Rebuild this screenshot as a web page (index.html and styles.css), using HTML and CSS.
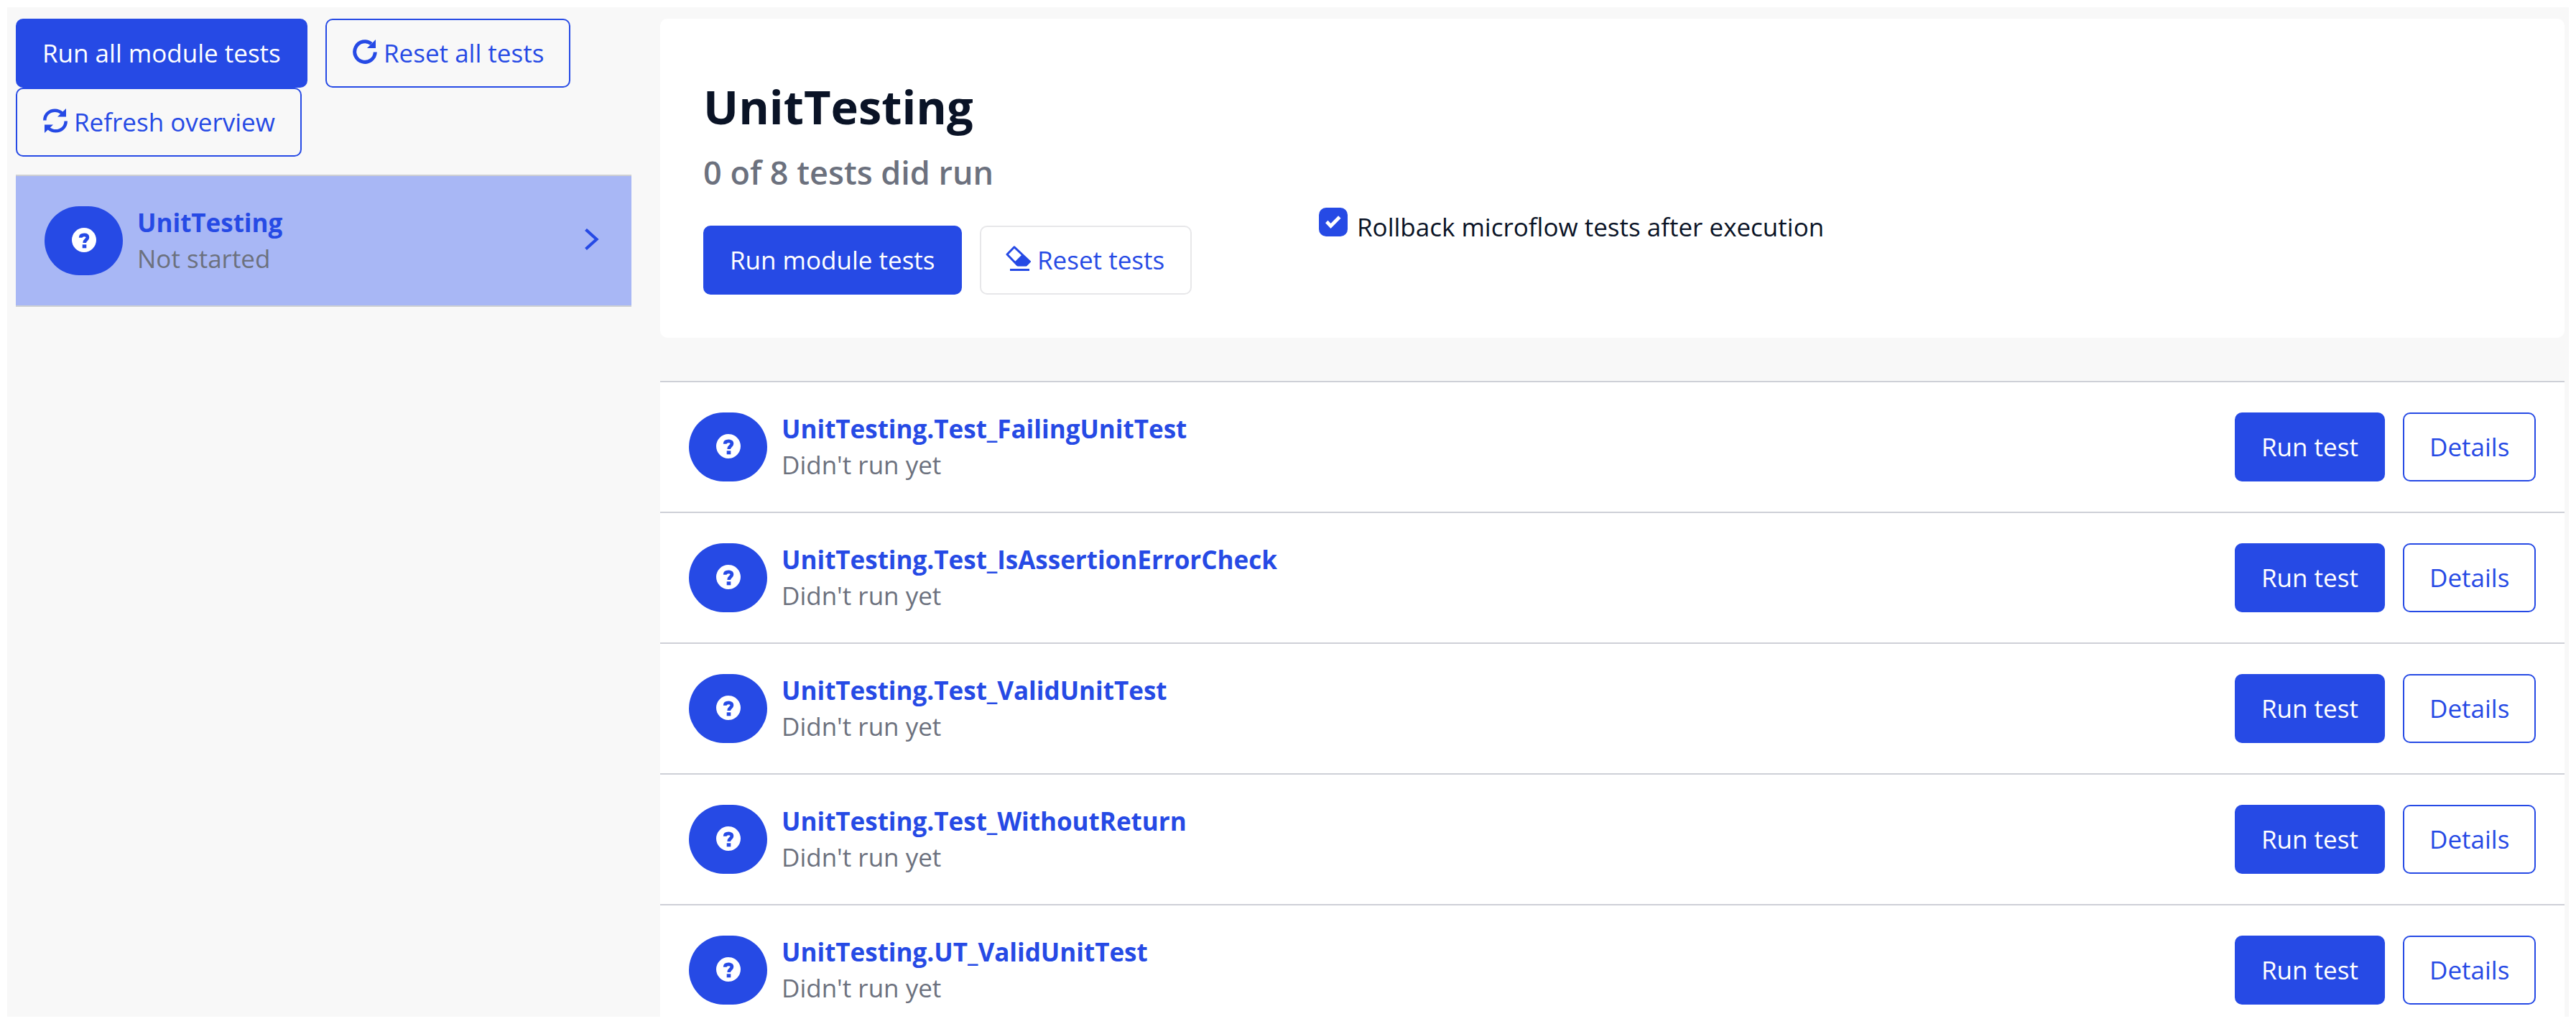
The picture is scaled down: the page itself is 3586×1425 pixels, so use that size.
FILE: index.html
```
<!DOCTYPE html>
<html lang="en">
<head>
<meta charset="utf-8">
<title>UnitTesting</title>
<link rel="stylesheet" href="styles.css">
</head>
<body>
<svg class="defs" width="0" height="0" aria-hidden="true">
  <symbol id="question" viewBox="0 0 34 34">
    <circle cx="17" cy="17" r="17" fill="#fff"/>
    <path d="M12.200 13.800C12.200 10.800 14.200 9.900 17.200 9.900c3.200 0 4.700 1.400 4.700 3.600 0 3.400-4.200 3-4.200 7.600" fill="none" stroke="#264ae5" stroke-width="4.700"/>
    <path d="M14.700 23.300h5.600v5h-5.600z" fill="#264ae5"/>
  </symbol>
</svg>
<div class="page">
  <aside class="sidebar">
    <div class="toolbar">
      <button class="btn primary run-all">Run all module tests</button>
      <button class="btn outline with-icon reset-all"><svg class="icon" viewBox="0 0 34 34"><path d="M31.300 17.500A14.300 14.300 0 1 1 26 5.900" fill="none" stroke="currentColor" stroke-width="5"/><path d="M32 0v12H20z" fill="currentColor"/></svg>Reset all tests</button>
      <button class="btn outline with-icon refresh"><svg class="icon" viewBox="0 0 34 34"><path d="M2.300 16.500C2.300 8 9 2.700 16.500 2.700c4 0 7 1.300 10 4M31.700 17.500c0 8.500-6.700 13.800-14.200 13.800-4 0-7-1.300-10-4" fill="none" stroke="currentColor" stroke-width="4.500"/><path d="M32 0v11.500H20zM2 34V22.500h12z" fill="currentColor"/></svg>Refresh overview</button>
    </div>
    <div class="module">
      <span class="badge"><svg><use href="#question"/></svg></span>
      <div class="label"><strong>UnitTesting</strong><span>Not started</span></div>
      <svg class="chevron" viewBox="0 0 21 30"><path d="M2.500 1.500L17.500 15L2.500 28.500" fill="none" stroke="currentColor" stroke-width="4.200"/></svg>
    </div>
  </aside>
  <main class="content">
    <section class="card">
      <div class="summary">
        <h1>UnitTesting</h1>
        <h2>0 of 8 tests did run</h2>
        <div class="actions">
          <button class="btn primary run-module">Run module tests</button>
          <button class="btn plain reset-module"><svg class="icon eraser" viewBox="0 0 36 36"><path d="M12 1.800L2 12L16.500 27H28.500L33.500 22Z" fill="none" stroke="currentColor" stroke-width="3" stroke-linejoin="round"/><path d="M22.500 12.500L34 22L29 28.300H17L13 22Z" fill="currentColor"/><path d="M6 32h27v3H6z" fill="currentColor"/></svg>Reset tests</button>
        </div>
      </div>
      <label class="rollback"><span class="checkbox"><svg viewBox="0 0 22 18"><path d="M1.800 8.500L7.500 14.500L19.800 2" fill="none" stroke="#fff" stroke-width="4.800"/></svg></span><span>Rollback microflow tests after execution</span></label>
    </section>
    <ul class="tests">
      <li class="test"><span class="badge"><svg><use href="#question"/></svg></span><div class="label"><strong>UnitTesting.Test_FailingUnitTest</strong><span>Didn't run yet</span></div><button class="btn primary run">Run test</button><button class="btn outline details">Details</button></li>
      <li class="test"><span class="badge"><svg><use href="#question"/></svg></span><div class="label"><strong>UnitTesting.Test_IsAssertionErrorCheck</strong><span>Didn't run yet</span></div><button class="btn primary run">Run test</button><button class="btn outline details">Details</button></li>
      <li class="test"><span class="badge"><svg><use href="#question"/></svg></span><div class="label"><strong>UnitTesting.Test_ValidUnitTest</strong><span>Didn't run yet</span></div><button class="btn primary run">Run test</button><button class="btn outline details">Details</button></li>
      <li class="test"><span class="badge"><svg><use href="#question"/></svg></span><div class="label"><strong>UnitTesting.Test_WithoutReturn</strong><span>Didn't run yet</span></div><button class="btn primary run">Run test</button><button class="btn outline details">Details</button></li>
      <li class="test"><span class="badge"><svg><use href="#question"/></svg></span><div class="label"><strong>UnitTesting.UT_ValidUnitTest</strong><span>Didn't run yet</span></div><button class="btn primary run">Run test</button><button class="btn outline details">Details</button></li>
    </ul>
  </main>
</div>
</body>
</html>
```
FILE: styles.css
```
* { box-sizing: border-box; }
html { height: 100%; background: #fff; }
body {
  margin: 0;
  height: 1425px;
  padding: 10px;
  overflow: hidden;
  font: 35px/50px "Open Sans", sans-serif;
  color: #0a1326;
}
.defs { display: block; height: 0; }
.page {
  display: flex;
  gap: 40px;
  height: 1405px;
  padding: 16px 6px 0 12px;
  overflow: hidden;
  background: #f8f8f8;
}
.sidebar { width: 857px; flex: none; }
.toolbar { display: flex; flex-wrap: wrap; column-gap: 25px; margin-bottom: 25px; }
.btn {
  display: flex;
  align-items: center;
  flex: none;
  height: 96px;
  margin: 0;
  padding: 0 0 0 35px;
  border: 2px solid #264ae5;
  border-radius: 10px;
  background: transparent;
  color: #264ae5;
  font: inherit;
  white-space: nowrap;
}
.primary { background: #264ae5; color: #fff; }
.plain { border-color: #e7e7e9; }
.with-icon { padding-left: 36px; }
.run-all { width: 406px; }
.reset-all { width: 341px; }
.refresh { width: 398px; }
.run-module { width: 360px; }
.reset-module { width: 295px; padding-left: 34px; }
.run { width: 209px; }
.details { width: 185px; margin-left: 25px; }
.icon { width: 34px; height: 34px; margin: -4px 9px 0 0; flex: none; }
.eraser { width: 36px; height: 36px; margin-right: 8px; }
.module, .test { display: flex; align-items: center; height: 184px; padding: 0 40px; }
.module {
  background: #a8b7f5;
  border: solid #ced0d3;
  border-width: 2px 0;
}
.badge {
  display: flex;
  align-items: center;
  justify-content: center;
  flex: none;
  width: 109px;
  height: 96px;
  margin-right: 20px;
  border-radius: 48px;
  background: #264ae5;
}
.badge svg { width: 34px; height: 34px; margin-top: -3px; }
.label { display: flex; flex-direction: column; flex: 1; }
.label strong { color: #264ae5; font-weight: 700; }
.label span { color: #6c717e; }
.chevron { width: 21px; height: 30px; margin: -4px 5px 0 0; color: #264ae5; }
.content { flex: 1; min-width: 0; }
.card {
  display: flex;
  height: 444px;
  padding: 0 60px;
  border-radius: 10px;
  background: #fff;
}
.summary { width: 857px; }
h1 { margin: 82px 0 0; font-size: 65px; line-height: 80px; font-weight: 700; }
h2 { margin: 22px 0 0; font-size: 45px; line-height: 60px; font-weight: 600; color: #6c717e; }
.actions { display: flex; gap: 25px; margin-top: 44px; }
.rollback { display: flex; align-items: flex-start; margin-top: 263px; height: 54px; }
.rollback > span:last-child { padding-top: 2px; }
.checkbox {
  display: flex;
  align-items: center;
  justify-content: center;
  width: 40px;
  height: 40px;
  margin-right: 13px;
  border-radius: 10px;
  background: #264ae5;
}
.checkbox svg { width: 22px; height: 18px; }
.tests { margin: 60px 0 0; padding: 0; list-style: none; }
.test { height: 182px; border-top: 2px solid #ced0d7; background: #fff; }
```
